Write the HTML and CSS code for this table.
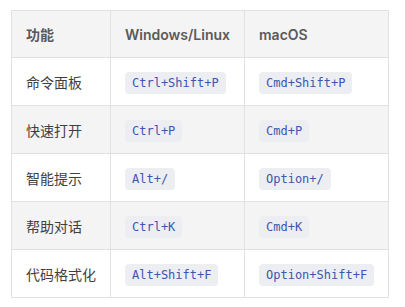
FILE: index.html
```html
<!DOCTYPE html>
<html lang="zh">
<head>
<meta charset="utf-8">
<link rel="stylesheet" href="styles.css">
</head>
<body>
<table class="keys">
  <thead>
    <tr><th>功能</th><th>Windows/Linux</th><th>macOS</th></tr>
  </thead>
  <tbody>
    <tr><td>命令面板</td><td><code>Ctrl+Shift+P</code></td><td><code>Cmd+Shift+P</code></td></tr>
    <tr><td>快速打开</td><td><code>Ctrl+P</code></td><td><code>Cmd+P</code></td></tr>
    <tr><td>智能提示</td><td><code>Alt+/</code></td><td><code>Option+/</code></td></tr>
    <tr><td>帮助对话</td><td><code>Ctrl+K</code></td><td><code>Cmd+K</code></td></tr>
    <tr><td>代码格式化</td><td><code>Alt+Shift+F</code></td><td><code>Option+Shift+F</code></td></tr>
  </tbody>
</table>
</body>
</html>
```
FILE: styles.css
```css
html, body {
  margin: 0;
  background: #ffffff;
}
body {
  padding: 10px 11px;
  font-family: Inter, "Noto Sans CJK SC", sans-serif;
  font-size: 14px;
  color: #3f3f3f;
}
.keys {
  border-collapse: collapse;
}
.keys th,
.keys td {
  border: 1px solid #e2e2e2;
  padding: 0 14px;
  height: 47px;
  text-align: left;
  white-space: nowrap;
}
.keys th {
  background: #f4f4f5;
  font-weight: 600;
  color: #5a5a5a;
  height: 46px;
}
.keys tbody tr:nth-child(even) td {
  background: #f4f4f5;
}
.keys code {
  font-family: "DejaVu Sans Mono", monospace;
  font-size: 12px;
  color: #3b57b0;
  background: #eceef2;
  padding: 4px 7px;
  border-radius: 4px;
}
```
